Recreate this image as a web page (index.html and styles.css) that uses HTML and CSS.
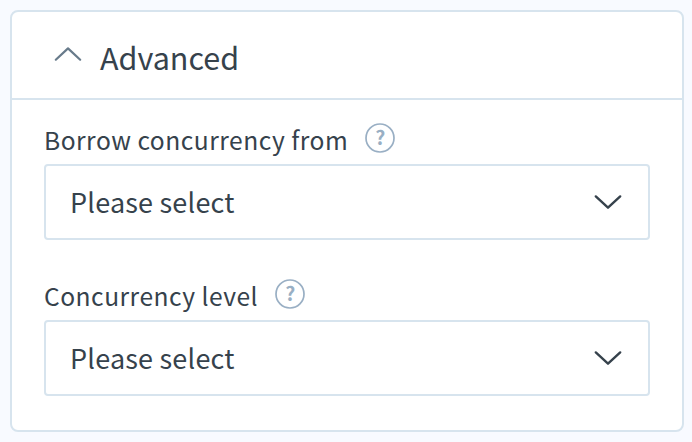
FILE: index.html
```html
<!DOCTYPE html>
<html lang="en">
<head>
    <meta charset="utf-8">
    <title>Advanced</title>
    <link rel="stylesheet" href="styles.css">
</head>
<body>
<section class="panel">
    <header class="panel-header">
        <svg class="toggle" width="28" height="16" viewBox="0 0 28 16">
            <path d="M1.8 13.7L14 2.4l12.2 11.3"/>
        </svg>
        <h2 class="panel-title">Advanced</h2>
    </header>
    <div class="panel-body">
        <div class="field">
            <div class="field-head">
                <span class="label">Borrow concurrency from</span>
                <svg class="help" width="30" height="30" viewBox="0 0 30 30">
                    <circle cx="15" cy="15" r="14"/>
                    <text x="15.2" y="22">?</text>
                </svg>
            </div>
            <div class="select">
                <span class="value">Please select</span>
                <svg class="arrow" width="28" height="16" viewBox="0 0 28 16">
                    <path d="M1.8 2.4L14 13.7 26.2 2.4"/>
                </svg>
            </div>
        </div>
        <div class="field">
            <div class="field-head">
                <span class="label">Concurrency level</span>
                <svg class="help" width="30" height="30" viewBox="0 0 30 30">
                    <circle cx="15" cy="15" r="14"/>
                    <text x="15.2" y="22">?</text>
                </svg>
            </div>
            <div class="select">
                <span class="value">Please select</span>
                <svg class="arrow" width="28" height="16" viewBox="0 0 28 16">
                    <path d="M1.8 2.4L14 13.7 26.2 2.4"/>
                </svg>
            </div>
        </div>
    </div>
</section>
</body>
</html>
```
FILE: styles.css
```css
* {
    box-sizing: border-box;
}
body {
    margin: 0;
    padding: 10px 8px 10px 10px;
    background-color: #f8faff;
    color: #36424c;
    font-family: "Noto Sans CJK SC", "Open Sans", sans-serif;
}
.panel {
    height: 422px;
    background-color: #fff;
    border: 2px solid #d7e4ee;
    border-radius: 8px;
}
.panel-header {
    display: flex;
    height: 88px;
    padding: 34px 0 0 42px;
    border-bottom: 2px solid #d7e4ee;
}
.panel-title {
    margin: -9px 0 0 18px;
    font-size: 30.5px;
    font-weight: normal;
    line-height: 40px;
}
svg path {
    fill: none;
    stroke-linecap: round;
    stroke-linejoin: round;
}
.toggle {
    stroke: #687b8b;
    stroke-width: 2.2;
}
.panel-body {
    padding: 22px 32px 0;
}
.field {
    margin-bottom: 38px;
}
.field-head {
    display: flex;
    height: 42px;
}
.label {
    font-size: 24.6px;
    line-height: 35px;
    letter-spacing: 0.5px;
}
.help {
    margin: 1px 0 0 17px;
}
.help circle {
    fill: none;
    stroke: #99afc4;
    stroke-width: 1.7;
}
.help text {
    fill: #99afc4;
    font-size: 19.5px;
    font-weight: bold;
    text-anchor: middle;
}
.select {
    display: flex;
    align-items: center;
    justify-content: space-between;
    height: 76px;
    padding: 0 26px 0 24px;
    border: 2px solid #d7e4ee;
    border-radius: 4px;
}
.value {
    font-size: 27px;
    line-height: 40px;
    letter-spacing: 0.2px;
}
.arrow {
    stroke: #36424c;
    stroke-width: 2.4;
}
```
